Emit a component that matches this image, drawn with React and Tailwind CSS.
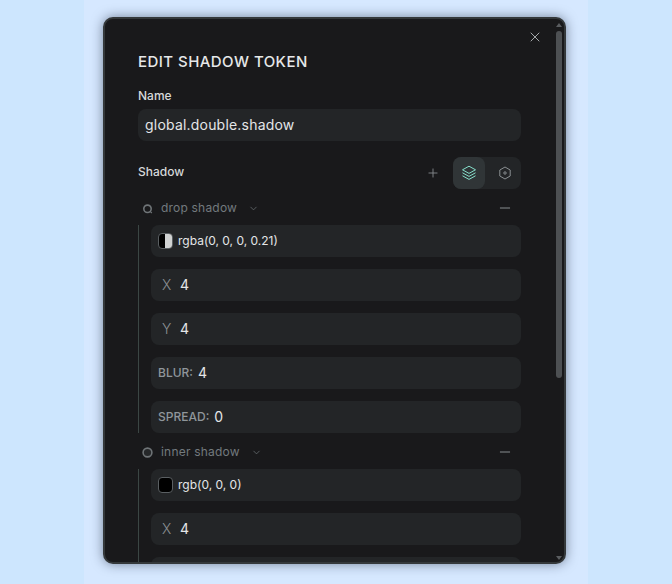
import React from 'react'
import { X, Plus, Minus, ChevronDown } from 'lucide-react'

const fieldClass = 'flex h-8 items-center rounded-lg bg-[#232527] pb-[1px] pl-[7px] pr-2 text-[14px] text-[#e4e6e7]'

const LayersIcon = () => (
  <svg width="16" height="16" viewBox="0 0 16 16" fill="none" stroke="#86e0cb" strokeWidth="1">
    <path d="M8 1.2 14.5 4.8 8 8.4 1.5 4.8Z" />
    <path d="M1.5 7.8 8 11.4 14.5 7.8" />
    <path d="M1.5 10.8 8 14.4 14.5 10.8" />
  </svg>
)

const HexIcon = () => (
  <svg width="14" height="14" viewBox="0 0 14 14" fill="none" stroke="#8a8f92" strokeWidth="1">
    <path d="M7 1 12.2 4V10L7 13 1.8 10V4Z" />
    <circle cx="7" cy="7" r="1.2" />
  </svg>
)

const ShadowDot = ({ inner }) => (
  <svg width="11" height="11" viewBox="0 0 11 11" fill="none">
    {inner && <circle cx="5.5" cy="5.5" r="4" fill="#26282a" />}
    <circle cx="5.5" cy={inner ? 5.5 : 5.8} r={inner ? 4.4 : 3.7} stroke="#6f7477" strokeWidth="1.6" />
    {!inner && <path d="M8.2 8.4 9.8 10" stroke="#6f7477" strokeWidth="1.2" />}
  </svg>
)

const LetterField = ({ letter, value }) => (
  <div className={fieldClass}>
    <span className="w-[22px] pl-[4px] text-[14px] font-light text-[#8a9093]">{letter}</span>
    <span>{value}</span>
  </div>
)

const LabelField = ({ label, value }) => (
  <div className={fieldClass}>
    <span className="mr-[5px] text-[12px] font-medium text-[#8f969b]">{label}</span>
    <span>{value}</span>
  </div>
)

const ColorField = ({ value, half }) => (
  <div className={`${fieldClass} pl-2`}>
    <span className="flex h-[16px] w-[15px] overflow-hidden rounded-[4px] border border-[#5a5f62] bg-black">
      {half && <span className="ml-[6px] w-[7px] bg-[#d0d2d2]" />}
    </span>
    <span className="ml-[5px] text-[12px]">{value}</span>
  </div>
)

const LayerHeader = ({ name, inner, chevronGap }) => (
  <div className="flex h-[24px] items-center pl-[4px] pr-[8px]">
    <ShadowDot inner={inner} />
    <span className="ml-[8px] text-[12px] tracking-[0.2px] text-[#737a7e]">{name}</span>
    <ChevronDown size={11} strokeWidth={1.5} className={`${chevronGap} text-[#737a7e]`} />
    <Minus size={16} strokeWidth={1.5} className="ml-auto text-[#888d90]" />
  </div>
)

const App = () => {
  return (
    <div className="h-[584px] overflow-hidden bg-[#cde6fe] font-['Inter',sans-serif]">
      <div className="mx-auto h-full w-[504px] bg-[#d6e8ff] pl-[19px] pt-[17px]">
        <div className="h-[547px] w-[463px] overflow-hidden rounded-[10px] border-2 border-[#34383a] bg-[#19191b] shadow-[0_0_12px_rgba(20,30,50,0.5)]">
          <div className="relative h-full">
            <X size={16} strokeWidth={1.5} className="absolute right-[21px] top-[10px] text-[#a4a8aa]" />
            <div className="absolute right-[2px] top-[12px] h-[347px] w-[6px] rounded-full bg-[#4d5053]" />
            <div className="absolute right-[2px] top-[4px] h-0 w-0 border-x-[3px] border-b-[4px] border-x-transparent border-b-[#5a5d60]" />
            <div className="absolute bottom-[2px] right-[2px] h-0 w-0 border-x-[3px] border-t-[4px] border-x-transparent border-t-[#5a5d60]" />

            <div className="pl-[33px] pr-[43px] pt-[33px]">
              <h2 className="text-[15px] font-[450] leading-5 tracking-[0.45px] text-[#e6e8e9]">EDIT SHADOW TOKEN</h2>

              <p className="mt-[16px] text-[12px] font-[450] leading-4 text-[#d6d8da]">Name</p>
              <div className="mt-[5px] flex h-8 items-center rounded-lg bg-[#232527] pb-[1px] pl-[7px] pr-2 text-[14px] tracking-[0.2px] text-[#e4e6e7]">
                global.double.shadow
              </div>

              <div className="mt-[16px] flex h-8 items-center">
                <span className="mb-[2px] text-[12px] font-[450] text-[#d6d8da]">Shadow</span>
                <Plus size={14} strokeWidth={1.5} className="ml-auto mr-[13px] text-[#888d90]" />
                <div className="flex h-8 w-[68px] gap-1 rounded-lg bg-[#232527]">
                  <span className="flex h-8 w-8 items-center justify-center rounded-lg bg-[#303537]">
                    <LayersIcon />
                  </span>
                  <span className="flex h-8 w-8 items-center justify-center">
                    <HexIcon />
                  </span>
                </div>
              </div>

              <div className="mt-[7px]">
                <LayerHeader name="drop shadow" chevronGap="ml-[11px]" />
                <div className="mt-[5px] flex flex-col gap-3 border-l border-[#3b4644] pl-3">
                  <ColorField value="rgba(0, 0, 0, 0.21)" half />
                  <LetterField letter="X" value="4" />
                  <LetterField letter="Y" value="4" />
                  <LabelField label="BLUR:" value="4" />
                  <LabelField label="SPREAD:" value="0" />
                </div>
              </div>

              <div className="mt-[7px]">
                <LayerHeader name="inner shadow" inner chevronGap="ml-[11px]" />
                <div className="mt-[5px] flex flex-col gap-3 border-l border-[#3b4644] pl-3">
                  <ColorField value="rgb(0, 0, 0)" />
                  <LetterField letter="X" value="4" />
                  <div className={fieldClass} />
                </div>
              </div>
            </div>
          </div>
        </div>
      </div>
    </div>
  )
}

export default App
